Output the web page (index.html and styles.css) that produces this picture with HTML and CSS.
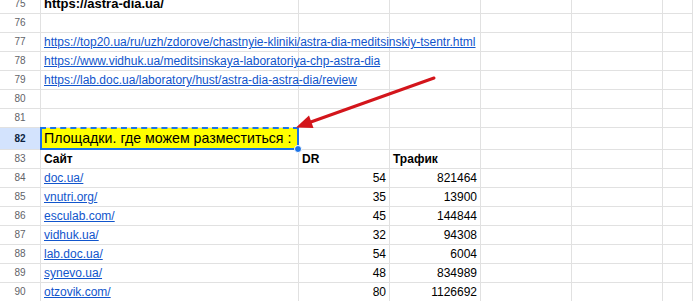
FILE: index.html
```html
<!DOCTYPE html>
<html>
<head>
<meta charset="utf-8">
<link rel="stylesheet" href="styles.css">
</head>
<body>
<div class="sheet">
  <div class="row"><div class="rh">75</div><div class="c title">https://astra-dia.ua/</div><div class="c"></div><div class="c"></div><div class="c"></div><div class="c"></div><div class="c"></div></div>
  <div class="row"><div class="rh">76</div><div class="c"></div><div class="c"></div><div class="c"></div><div class="c"></div><div class="c"></div><div class="c"></div></div>
  <div class="row"><div class="rh">77</div><div class="c ov"><a class="lnk">https://top20.ua/ru/uzh/zdorove/chastnyie-kliniki/astra-dia-meditsinskiy-tsentr.html</a></div><div class="c"></div><div class="c"></div><div class="c"></div><div class="c"></div><div class="c"></div></div>
  <div class="row"><div class="rh">78</div><div class="c ov"><a class="lnk">https://www.vidhuk.ua/meditsinskaya-laboratoriya-chp-astra-dia</a></div><div class="c"></div><div class="c"></div><div class="c"></div><div class="c"></div><div class="c"></div></div>
  <div class="row"><div class="rh">79</div><div class="c ov"><a class="lnk">https://lab.doc.ua/laboratory/hust/astra-dia-astra-dia/review</a></div><div class="c"></div><div class="c"></div><div class="c"></div><div class="c"></div><div class="c"></div></div>
  <div class="row"><div class="rh">80</div><div class="c"></div><div class="c"></div><div class="c"></div><div class="c"></div><div class="c"></div><div class="c"></div></div>
  <div class="row"><div class="rh">81</div><div class="c"></div><div class="c"></div><div class="c"></div><div class="c"></div><div class="c"></div><div class="c"></div></div>
  <div class="row tall"><div class="rh sel">82</div><div class="c big"><span>Площадки. где можем разместиться :</span><div class="selbox"><div class="handle"></div></div></div><div class="c"></div><div class="c"></div><div class="c"></div><div class="c"></div><div class="c"></div></div>
  <div class="row"><div class="rh">83</div><div class="c b">Сайт</div><div class="c b">DR</div><div class="c b">Трафик</div><div class="c"></div><div class="c"></div><div class="c"></div></div>
  <div class="row"><div class="rh">84</div><div class="c"><a class="lnk">doc.ua/</a></div><div class="c n">54</div><div class="c n">821464</div><div class="c"></div><div class="c"></div><div class="c"></div></div>
  <div class="row"><div class="rh">85</div><div class="c"><a class="lnk">vnutri.org/</a></div><div class="c n">35</div><div class="c n">13900</div><div class="c"></div><div class="c"></div><div class="c"></div></div>
  <div class="row"><div class="rh">86</div><div class="c"><a class="lnk">esculab.com/</a></div><div class="c n">45</div><div class="c n">144844</div><div class="c"></div><div class="c"></div><div class="c"></div></div>
  <div class="row"><div class="rh">87</div><div class="c"><a class="lnk">vidhuk.ua/</a></div><div class="c n">32</div><div class="c n">94308</div><div class="c"></div><div class="c"></div><div class="c"></div></div>
  <div class="row"><div class="rh">88</div><div class="c"><a class="lnk">lab.doc.ua/</a></div><div class="c n">54</div><div class="c n">6004</div><div class="c"></div><div class="c"></div><div class="c"></div></div>
  <div class="row"><div class="rh">89</div><div class="c"><a class="lnk">synevo.ua/</a></div><div class="c n">48</div><div class="c n">834989</div><div class="c"></div><div class="c"></div><div class="c"></div></div>
  <div class="row"><div class="rh">90</div><div class="c"><a class="lnk">otzovik.com/</a></div><div class="c n">80</div><div class="c n">1126692</div><div class="c"></div><div class="c"></div><div class="c"></div></div>
</div>
<svg class="arrow" width="693" height="301" viewBox="0 0 693 301">
  <line x1="434" y1="78" x2="308" y2="123" stroke="#d3151b" stroke-width="3" stroke-linecap="round"/>
  <polygon points="296,127.5 309,115.5 313.5,128" fill="#d3151b"/>
</svg>
</body>
</html>
```

FILE: styles.css
```css
html, body {
  margin: 0;
  padding: 0;
  background: #ffffff;
}
body {
  position: relative;
  width: 693px;
  height: 301px;
  overflow: hidden;
  font-family: "Liberation Sans", Arial, sans-serif;
  font-size: 12px;
  color: #000;
}
.sheet {
  margin-top: -5px;
  display: flex;
  flex-direction: column;
}
.row {
  display: grid;
  grid-template-columns: 41px 258px 91px 91px 91px 91px 1fr;
  height: 19px;
}
.row.tall {
  height: 22px;
}
.rh, .c {
  box-sizing: border-box;
  border-right: 1px solid #e1e1e1;
  border-bottom: 1px solid #e1e1e1;
  white-space: nowrap;
  line-height: 18px;
}
.rh {
  font-size: 10px;
  color: #5f6368;
  text-align: center;
  background: #fff;
}
.rh.sel {
  background: #d3e3fd;
  color: #0b1f3f;
  font-weight: bold;
  line-height: 21px;
}
.c {
  padding: 0 3px;
  overflow: hidden;
}
.c.ov {
  overflow: visible;
  position: relative;
  z-index: 1;
}
.title {
  font-weight: bold;
  font-size: 13px;
}
.lnk {
  color: #1155cc;
  text-decoration: underline;
}
.b {
  font-weight: bold;
}
.n {
  text-align: right;
}
.big {
  position: relative;
  overflow: visible;
  background: #ffff00;
  font-size: 14.2px;
  line-height: 21px;
}
.selbox {
  position: absolute;
  left: -1px;
  top: -1px;
  right: -1px;
  bottom: -1px;
  border: 2px solid #1a73e8;
  border-top-style: dashed;
  pointer-events: none;
}
.handle {
  position: absolute;
  right: -5px;
  bottom: -5px;
  width: 6px;
  height: 6px;
  border-radius: 50%;
  background: #1a73e8;
  border: 1px solid #fff;
}
.arrow {
  position: absolute;
  left: 0;
  top: 0;
  pointer-events: none;
}
```
